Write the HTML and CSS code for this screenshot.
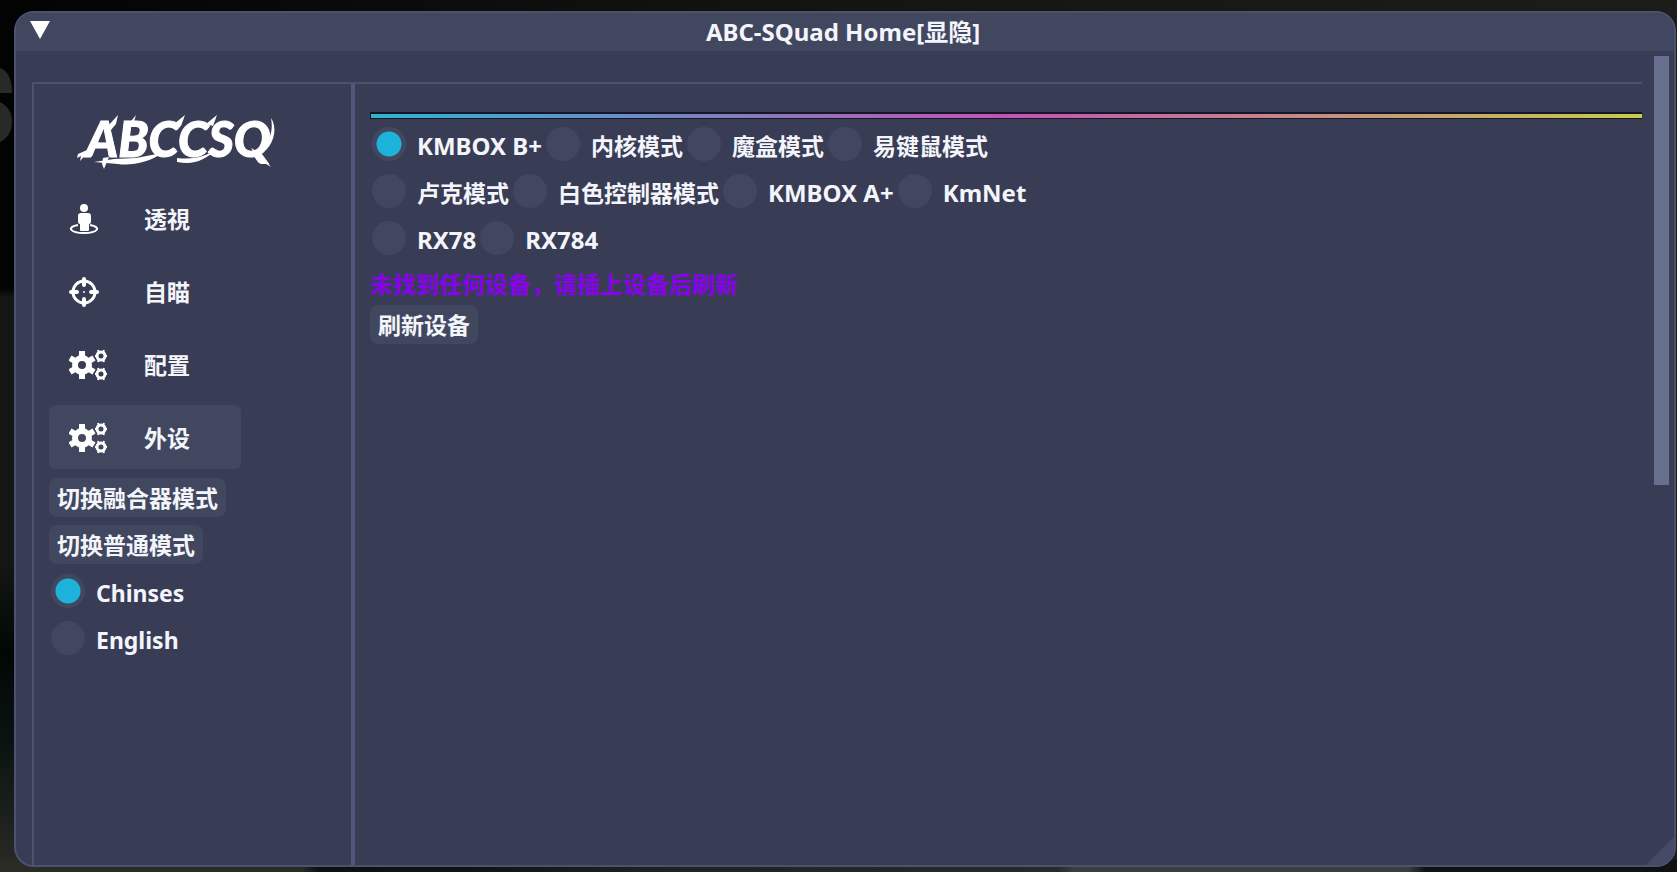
FILE: index.html
```html
<!DOCTYPE html>
<html lang="zh">
<head>
    <meta charset="UTF-8">
    <meta name="viewport" content="width=device-width, initial-scale=1.0">
    <title>ABC-SQuad Home</title>
    <link rel="stylesheet" href="styles.css">
</head>
<body>
    <svg class="backdrop" width="14" height="80" viewBox="0 0 14 80">
        <path d="M0 2q12 4 12 25H0zM0 36q12 6 12 20T0 76z"/>
    </svg>
    <div class="window">
        <header class="title-bar">
            <button class="collapse" aria-label="Collapse">
                <svg width="20" height="18" viewBox="0 0 20 18"><path d="M0 0h20L10 18z" fill="#fff"/></svg>
            </button>
            <h1 class="latin">ABC-SQuad Home[显隐]</h1>
        </header>
        <div class="body">
            <div class="panel">
                <aside class="sidebar">
                    <svg class="logo" width="204" height="60" viewBox="0 0 204 60" role="img" aria-label="ABCCSQ">
                        <text x="9" y="45">ABCCSQ</text>
                        <!-- brush strokes around the lettering -->
                        <path d="M1 42l9-4 3-5 10-3-4 5-8 5-8 9 1-5-4 2z"/>
                        <path d="M17 50l20-3 22-1 26-5c-12 9-30 13-44 11z"/>
                        <path d="M26 46l6-1-5 12-2-5z"/>
                        <path d="M100 46c18 2 30-2 41-10-14 13-24 17-41 14z"/>
                        <path d="M30 15l11-12-2 9-5 6zM51 13l8-10-3 10zM97 12l11-9-4 11zM129 12l11-9-4 11z"/>
                        <path d="M174 36l9 5 11 14-13-8z"/>
                        <path d="M189 32c5-8 7-15 5-26 6 9 4 23-5 32z"/>
                    </svg>
                    <nav class="menu">
                        <button class="menu-item">
                            <svg class="icon" width="40" height="32" viewBox="0 0 40 32">
                                <circle cx="15" cy="5" r="4"/>
                                <path d="M12 10h7q3 0 3 3v6q0 2-2 2v6q0 1-1 1h-7q-1 0-1-1v-6q-2 0-2-2v-6q0-3 3-3z"/>
                                <path class="line" d="M9 22C-3 24 1 30 15 30s18-6 6-8"/>
                            </svg>
                            <span>透視</span>
                        </button>
                        <button class="menu-item">
                            <svg class="icon" width="40" height="32" viewBox="0 0 40 32">
                                <circle class="ring" cx="15" cy="16" r="11"/>
                                <path class="thick" d="M15 3v6M15 23v6M2 16h6M22 16h6"/>
                                <circle cx="15" cy="16" r="1"/>
                            </svg>
                            <span>自瞄</span>
                        </button>
                        <button class="menu-item">
                            <svg class="icon" width="40" height="32" viewBox="0 0 40 32"><use href="#gears"/></svg>
                            <span>配置</span>
                        </button>
                        <button class="menu-item active">
                            <svg class="icon" width="40" height="32" viewBox="0 0 40 32">
                                <g id="gears">
                                    <circle class="gear-big" cx="13" cy="16" r="7"/>
                                    <path class="teeth-big" d="M13 2v6M13 24v6M1 9l5 3M20 20l5 3M1 23l5-3M20 12l5-3"/>
                                    <circle class="gear-small" cx="32" cy="7" r="4"/>
                                    <path class="teeth-small" d="M29 1l1 3M35 1l-1 3M26 7h2M36 7h2M29 13l1-3M35 13l-1-3"/>
                                    <circle class="gear-small" cx="32" cy="25" r="4"/>
                                    <path class="teeth-small" d="M29 19l1 3M35 19l-1 3M26 25h2M36 25h2M29 31l1-3M35 31l-1-3"/>
                                </g>
                            </svg>
                            <span>外设</span>
                        </button>
                    </nav>
                    <button class="btn">切换融合器模式</button>
                    <button class="btn">切换普通模式</button>
                    <div class="languages">
                        <label class="radio"><input type="radio" name="lang" checked><span>Chinses</span></label>
                        <label class="radio"><input type="radio" name="lang"><span>English</span></label>
                    </div>
                </aside>
                <main class="content">
                    <div class="rainbow"></div>
                    <div class="radio-row">
                        <label class="radio"><input type="radio" name="device" checked><span class="latin">KMBOX B+</span></label>
                        <label class="radio"><input type="radio" name="device"><span>内核模式</span></label>
                        <label class="radio"><input type="radio" name="device"><span>魔盒模式</span></label>
                        <label class="radio"><input type="radio" name="device"><span>易键鼠模式</span></label>
                    </div>
                    <div class="radio-row">
                        <label class="radio"><input type="radio" name="device"><span>卢克模式</span></label>
                        <label class="radio"><input type="radio" name="device"><span>白色控制器模式</span></label>
                        <label class="radio"><input type="radio" name="device"><span class="latin">KMBOX A+</span></label>
                        <label class="radio"><input type="radio" name="device"><span class="latin">KmNet</span></label>
                    </div>
                    <div class="radio-row">
                        <label class="radio"><input type="radio" name="device"><span class="latin">RX78</span></label>
                        <label class="radio"><input type="radio" name="device"><span class="latin">RX784</span></label>
                    </div>
                    <p class="warning">未找到任何设备，请插上设备后刷新</p>
                    <button class="btn">刷新设备</button>
                </main>
            </div>
            <div class="scrollbar"><div class="thumb"></div></div>
        </div>
        <svg class="grip" width="28" height="28" viewBox="0 0 28 28"><path d="M28 0v28H0z"/></svg>
    </div>
</body>
</html>
```

FILE: styles.css
```css
:root {
    --window-bg: #383c55;
    --control-bg: #41475f;
    --border: #4b526e;
    --accent: #1cb2da;
    --text: #f4f5fa;
}

* {
    box-sizing: border-box;
}

body {
    margin: 0;
    height: 100vh;
    padding: 11px 1px 5px 14px;
    overflow: hidden;
    background:
        linear-gradient(to right, #2a2a26 18%, #0e100f 19%, #121413 29%, #1e2322 40%, #262a29 63%, #3c3c3a 64%, #3c3c3a 84%, #101211 85%) bottom / 100% 12px no-repeat,
        linear-gradient(#020302 33%, #131612 34%, #131612 65%, #020706 75%, #0a1312 85%, #2a2a24) left / 30px 100% no-repeat,
        linear-gradient(to right, #020302, #141413 50%, #1c1c1b);
    color: var(--text);
    font: 700 23px/32px "Noto Sans", "Noto Sans CJK SC", sans-serif;
}

button {
    border: none;
    color: inherit;
    font: inherit;
    cursor: pointer;
}

.backdrop {
    position: absolute;
    left: 0;
    top: 66px;
    fill: #272a26;
}

.window {
    position: relative;
    display: flex;
    flex-direction: column;
    height: 100%;
    border: 2px solid var(--border);
    border-radius: 20px;
    background: var(--window-bg);
    overflow: hidden;
}

.title-bar {
    position: relative;
    flex: none;
    height: 38px;
    background: var(--control-bg);
    text-align: center;
}

.title-bar h1 {
    margin: 0;
    padding: 3px 4px 0 0;
}

.latin {
    font-size: 24px;
}

.collapse {
    position: absolute;
    left: 14px;
    top: 8px;
    padding: 0;
    background: none;
    line-height: 0;
}

.body {
    flex: 1;
    display: flex;
    min-height: 0;
    padding: 5px 5px 0 16px;
}

.panel {
    flex: 1;
    display: flex;
    margin-top: 26px;
    border-top: 2px solid var(--border);
    border-left: 2px solid var(--border);
}

.sidebar {
    flex: none;
    width: 321px;
    padding: 28px 15px;
    border-right: 4px solid #50577a;
}

.logo {
    display: block;
    margin-left: 28px;
    overflow: visible;
    fill: #fff;
    font: italic 900 49px/60px "Lato", sans-serif;
}

.logo text {
    stroke: #fff;
    stroke-width: 1px;
}

.menu {
    display: flex;
    flex-direction: column;
    gap: 9px;
    margin: 14px 0 9px;
}

.menu-item {
    display: flex;
    align-items: center;
    width: 192px;
    height: 64px;
    padding: 2px 20px 0;
    gap: 35px;
    border-radius: 6px;
    background: none;
}

.menu-item.active {
    background: var(--control-bg);
}

.icon {
    fill: #fff;
    stroke: none;
}

.line,
.ring,
.thick,
.gear-big,
.gear-small,
.teeth-big,
.teeth-small {
    fill: none;
    stroke: #fff;
}

.line,
.teeth-small {
    stroke-width: 2px;
}

.ring {
    stroke-width: 3px;
}

.thick {
    stroke-width: 4px;
    stroke-linecap: round;
}

.gear-big,
.teeth-big {
    stroke-width: 6px;
}

.gear-small {
    stroke-width: 3px;
}

.btn {
    display: block;
    height: 39px;
    margin-bottom: 8px;
    padding: 3px 8px;
    border-radius: 8px;
    background: var(--control-bg);
}

.languages {
    padding-top: 2px;
}

.radio {
    display: flex;
    align-items: center;
    gap: 11px;
    height: 34px;
    margin-bottom: 13px;
    padding-left: 2px;
    white-space: nowrap;
}

.radio span {
    padding-top: 3px;
}

.radio input {
    appearance: none;
    flex: none;
    width: 34px;
    height: 34px;
    margin: 0;
    border-radius: 50%;
    background: var(--control-bg);
}

.radio input:checked {
    background: radial-gradient(circle, var(--accent) 12px, var(--control-bg) 13px);
}

.content {
    flex: 1;
    padding: 28px 0 0 15px;
}

.rainbow {
    height: 7px;
    margin-bottom: 8px;
    border: solid #15162a;
    border-width: 2px 0 1px 1px;
    background: linear-gradient(to right, #2fb4cc, #c353b4 50%, #c6cc4a);
}

.radio-row {
    display: flex;
    gap: 2px;
}

.warning {
    margin: 0 0 5px;
    color: #8a00f0;
}

.scrollbar {
    flex: none;
    width: 15px;
    margin-left: 12px;
}

.thumb {
    height: 53%;
    background: #68708f;
}

/* resize corner */
.grip {
    position: absolute;
    right: 0;
    bottom: 0;
    fill: #434b66;
}
```
